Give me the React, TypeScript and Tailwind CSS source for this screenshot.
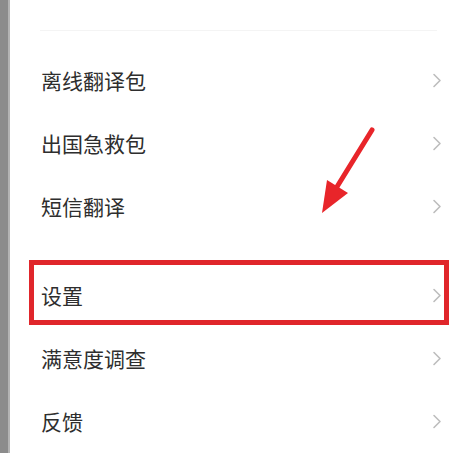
import React from 'react'

const groupA = ['离线翻译包', '出国急救包', '短信翻译']
const groupB = ['设置', '满意度调查', '反馈']

function Chevron() {
  return (
    <svg width="10" height="15" viewBox="0 0 10 15" className="shrink-0">
      <polyline points="2,1.5 8,7.5 2,13.5" fill="none" stroke="#bdbdbd" strokeWidth="1.6" strokeLinecap="round" strokeLinejoin="round" />
    </svg>
  )
}

function Row({ label }: { label: string }) {
  return (
    <div className="h-[64px] flex items-center justify-between pl-[31px] pr-[31px]">
      <span className="text-[21px] leading-none text-[#2e2e2e]">{label}</span>
      <Chevron />
    </div>
  )
}

export default function App() {
  return (
    <div
      className="relative w-[473px] h-[453px] overflow-hidden bg-white flex"
      style={{ fontFamily: '"Noto Sans CJK SC", "Noto Sans", sans-serif' }}
    >
      <div className="w-[10px] shrink-0 bg-[#8c8c8c] border-r-2 border-[#b4b4b4]" />
      <div className="flex-1 flex flex-col">
        <div className="h-[49px] pt-[30px]">
          <div className="ml-[30px] mr-[36px] h-px bg-[#f4f4f4]" />
        </div>
        {groupA.map((t) => (
          <Row key={t} label={t} />
        ))}
        <div className="h-[27px]" />
        {groupB.map((t) => (
          <Row key={t} label={t} />
        ))}
      </div>

      {/* annotation: red frame round the settings row */}
      <div className="absolute left-[29px] top-[260px] w-[420px] h-[65px] border-[5px] border-[#e0262b]" />

      {/* annotation: arrow */}
      <svg className="absolute left-0 top-0" width="473" height="453">
        <line x1="372" y1="130" x2="335" y2="190" stroke="#e8252a" strokeWidth="5" strokeLinecap="round" />
        <polygon points="322,213 327,180 348,193" fill="#e8252a" />
      </svg>
    </div>
  )
}
